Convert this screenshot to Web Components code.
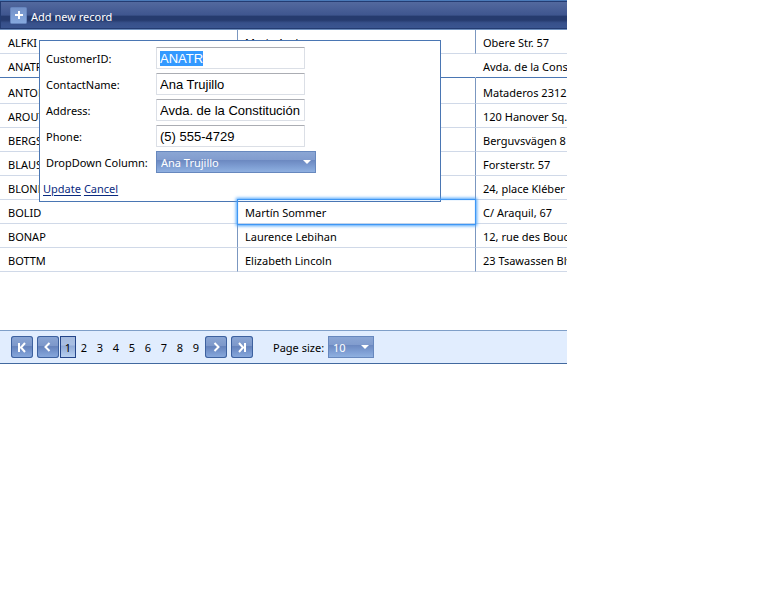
<!DOCTYPE html>
<html lang="en">
<head>
<meta charset="utf-8">
<title>Customers</title>
<style>
  body { margin: 0; background: #fff; color: #000; font: 12px/16px "Noto Sans", "Open Sans", sans-serif; }
  customer-page { margin-right: 201px; }
</style>
</head>
<body>
<customer-page></customer-page>
<script>
const define = (name, html, setup) => customElements.define(name, class extends HTMLElement {
  connectedCallback() {
    if (this.shadowRoot) return;
    const t = document.createElement('template');
    t.innerHTML = typeof html === 'function' ? html(this) : html;
    this.attachShadow({ mode: 'open' }).append(t.content.cloneNode(true));
    if (setup) setup(this.shadowRoot, this);
  }
});

define('grid-toolbar', `
<style>
  :host { display: block; border-top: 1px solid #4a7ab8; border-bottom: 1px solid #6f8fbd; }
  div { height: 28px; box-sizing: border-box; display: flex; align-items: center; padding: 1px 0 0 9px;
    border: 1px solid #243c72; border-right: 0;
    background: linear-gradient(#53699e 0, #3f568f 50%, #263b6e 55%, #263b6e 70%, #37508a 80%, #3a5590 100%); }
  button { display: flex; align-items: center; gap: 4px; border: 0; padding: 0; background: none; color: #fff; font: inherit; font-size: 11px; line-height: 16px; }
  span { padding-top: 2px; }
  svg { display: block; }
</style>
<div><button type="button">
  <svg width="17" height="17" viewBox="0 0 17 17" aria-hidden="true">
    <defs><linearGradient id="g" x2="0" y2="1"><stop stop-color="#7391c7"/><stop offset="1" stop-color="#86a9df"/></linearGradient></defs>
    <rect x=".5" y=".5" width="16" height="16" rx="1" fill="url(#g)" stroke="#6685be"/>
    <path d="M9 4v8M5 8h8" stroke="#fff" stroke-width="2"/>
  </svg><span><slot></slot></span></button></div>`);

define('text-field', el => `
<style>
  :host { display: block; }
  div { display: flex; align-items: center; }
  label { width: 110px; flex: none; padding-top: 2px; white-space: nowrap; font-size: 11px; }
  input { width: 149px; height: 22px; box-sizing: border-box; padding: 0 2px 0 3px; outline: 0; color: #000; background: #fff;
    border: 1px solid #dbdfe6; border-top-color: #abadb3; border-radius: 1px; font: 13px "Liberation Sans", Arial, sans-serif; }
  input::selection { background: #3399ff; color: #fff; }
</style>
<div><label for="c">${el.getAttribute('label')}</label><input id="c" type="text" value="${el.getAttribute('value')}"></div>`,
(root, el) => { if (el.hasAttribute('selected')) { const i = root.querySelector('input'); i.focus(); i.select(); } });

define('drop-down', el => `
<style>
  :host { display: block; }
  div { display: flex; align-items: center; }
  label { width: var(--label-width); flex: none; padding-top: 2px; white-space: nowrap; font-size: 11px; }
  span { display: grid; width: var(--box-width); height: 22px; }
  select, svg { grid-area: 1 / 1; }
  select { appearance: none; width: 100%; height: 100%; box-sizing: border-box; margin: 0; padding: 2px 16px 0 4px; border: 1px solid #6788be; border-radius: 0;
    color: #fff; font: inherit; font-size: 11px;
    background: linear-gradient(#8ba6d4, #819cce 40%, #6c89c1 42%, #7f9fd4 75%, #8fb0e0); }
  svg { justify-self: end; align-self: center; margin-right: 5px; pointer-events: none; }
</style>
<div><label for="c">${el.getAttribute('label')}</label><span>
  <select id="c"><option>${el.getAttribute('value')}</option></select>
  <svg width="8" height="4" viewBox="0 0 8 4" aria-hidden="true"><path d="M0 0h8L4 4z" fill="#fff"/></svg></span></div>`);

define('edit-form', `
<style>
  :host { display: block; box-sizing: border-box; background: #fff; border: 1px solid #4a76b3; }
  form { margin: 0; padding: 6px 0 2px 6px; display: grid; gap: 4px; }
  drop-down { --label-width: 110px; --box-width: 160px; }
  nav { display: flex; align-items: center; gap: 3px; height: 22px; margin-left: -3px; }
  a { padding-top: 2px; color: #0a2a80; font-size: 11px; text-decoration: underline; text-underline-offset: 2px; }
</style>
<form>
  <text-field label="CustomerID:" value="ANATR" selected></text-field>
  <text-field label="ContactName:" value="Ana Trujillo"></text-field>
  <text-field label="Address:" value="Avda. de la Constitución"></text-field>
  <text-field label="Phone:" value="(5) 555-4729"></text-field>
  <drop-down label="DropDown Column:" value="Ana Trujillo"></drop-down>
  <nav><a href="#update">Update</a><a href="#cancel">Cancel</a></nav>
</form>`);

const rows = [
  ['ALFKI', 'Maria Anders', 'Obere Str. 57'],
  ['ANATR', '', 'Avda. de la Constitución', 'edited'],
  ['ANTON', '', 'Mataderos 2312', 'after'],
  ['AROUT', '', '120 Hanover Sq.'],
  ['BERGS', '', 'Berguvsvägen 8'],
  ['BLAUS', '', 'Forsterstr. 57'],
  ['BLONP', '', '24, place Kléber'],
  ['BOLID', 'Martín Sommer', 'C/ Araquil, 67', 'current'],
  ['BONAP', 'Laurence Lebihan', '12, rue des Bouchers'],
  ['BOTTM', 'Elizabeth Lincoln', '23 Tsawassen Blvd.']
];
define('customer-table', `
<style>
  :host { display: block; overflow: hidden; }
  table { width: 100%; table-layout: fixed; border-collapse: separate; border-spacing: 0; }
  .id { width: 237px; }
  .name { width: 238px; }
  td { height: 24px; box-sizing: border-box; padding: 2px 0 0 7px; border-bottom: 1px solid #d0d9e8; border-left: 1px solid #7b97c0;
    font-size: 11px; line-height: 16px; white-space: nowrap; overflow: hidden; }
  td:first-child { padding-left: 8px; border-left: 0; }
  tr.edited td { border-left-color: transparent; border-bottom-color: #4a76b3; }
  tr.after td { height: 26px; padding-top: 4px; }
  tr.current td:nth-child(2) { position: relative; overflow: visible; z-index: 3; }
  tr.current td:nth-child(2)::after { content: ""; position: absolute; inset: -1px -1px -2px -1px; border: 1px solid #3e97f5;
    box-shadow: 0 0 3px 1px #4ba3fb, inset 0 0 1px #4ba3fb; pointer-events: none; }
</style>
<table aria-label="Customers"><colgroup><col class="id"><col class="name"><col></colgroup><tbody>
${rows.map(r => `<tr class="${r[3] || ''}">${r.slice(0, 3).map(c => `<td>${c}</td>`).join('')}</tr>`).join('')}
</tbody></table>`);

const icons = {
  first: 'M8 7v9M14 7l-4 4.5 4 4.5M8 11.5h3', prev: 'M12.5 7L8.5 11l4 4', next: 'M9.5 7l4 4-4 4', last: 'M8 7l4 4.5L8 16M14 7v9M11 11.5h3'
};
const btn = (k, label) => `<button type="button" aria-label="${label}"><svg width="22" height="22" viewBox="0 0 22 22" aria-hidden="true"><path d="${icons[k]}" fill="none" stroke="#fff" stroke-width="2"/></svg></button>`;
define('grid-pager', `
<style>
  :host { display: flex; align-items: center; height: 32px; padding-left: 11px; background: #e1edfe; border-top: 1px solid #7f9fc8; border-bottom: 1px solid #42699f; }
  .set { display: flex; gap: 4px; }
  button { width: 22px; height: 22px; padding: 0; border: 0; border-radius: 3px; box-shadow: inset 0 0 0 1px #3d619f;
    background: linear-gradient(#8ba6d4, #7d98ca 44%, #6582bb 48%, #7898cf 75%, #8aabde); }
  svg { display: block; }
  nav { display: flex; margin: 0 1px; }
  a { width: 16px; height: 22px; box-sizing: border-box; padding-top: 1px; text-align: center; font-size: 11px; line-height: 22px; color: #000; text-decoration: none; }
  a[aria-current] { border: 1px solid #24458a; line-height: 20px; background: linear-gradient(#a5badd, #a9bfe4 40%, #8fa9d6 45%, #b7cff0); }
  drop-down { margin-left: 20px; --label-width: 55px; --box-width: 46px; }
</style>
<div class="set">${btn('first', 'First page')}${btn('prev', 'Previous page')}</div>
<nav aria-label="Pages">${[1,2,3,4,5,6,7,8,9].map(n => `<a href="#page-${n}"${n === 1 ? ' aria-current="page"' : ''}>${n}</a>`).join('')}</nav>
<div class="set">${btn('next', 'Next page')}${btn('last', 'Last page')}</div>
<drop-down label="Page size:" value="10"></drop-down>`);

define('customer-page', `
<style>
  :host { display: block; position: relative; }
  customer-table { min-height: 300px; }
  edit-form { position: absolute; left: 39px; top: 40px; width: 402px; z-index: 2; }
</style>
<grid-toolbar>Add new record</grid-toolbar>
<customer-table></customer-table>
<edit-form></edit-form>
<grid-pager></grid-pager>`);
</script>
</body>
</html>
